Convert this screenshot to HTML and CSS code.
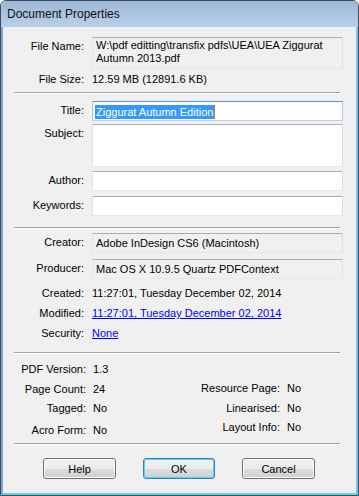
FILE: index.html
```html
<!DOCTYPE html>
<html lang="en">
<head>
  <meta charset="UTF-8">
  <meta name="viewport" content="width=device-width, initial-scale=1.0">
  <title>Document Properties</title>
  <link rel="stylesheet" href="styles.css">
</head>
<body>
  <div class="window">
    <div class="titlebar">Document Properties</div>
    <div class="frame">
      <div class="content">
        <div class="row file-name">
          <span class="label">File Name:</span>
          <div class="box readonly tall">W:\pdf editting\transfix pdfs\UEA\UEA Ziggurat Autumn 2013.pdf</div>
        </div>
        <div class="row text-row">
          <span class="label">File Size:</span>
          <span class="value">12.59 MB (12891.6 KB)</span>
        </div>

        <div class="sep sep-1"></div>

        <div class="row title-row">
          <span class="label">Title:</span>
          <div class="box focus"><span class="selected">Ziggurat Autumn Edition</span><span class="caret"></span></div>
        </div>
        <div class="row subject-row">
          <span class="label">Subject:</span>
          <div class="box subject"></div>
        </div>
        <div class="row author-row">
          <span class="label">Author:</span>
          <div class="box"></div>
        </div>
        <div class="row keywords-row">
          <span class="label">Keywords:</span>
          <div class="box"></div>
        </div>

        <div class="sep sep-2"></div>

        <div class="row creator-row">
          <span class="label">Creator:</span>
          <div class="box readonly">Adobe InDesign CS6 (Macintosh)</div>
        </div>
        <div class="row producer-row">
          <span class="label">Producer:</span>
          <div class="box readonly">Mac OS X 10.9.5 Quartz PDFContext</div>
        </div>
        <div class="row text-row created-row">
          <span class="label">Created:</span>
          <span class="value">11:27:01, Tuesday December 02, 2014</span>
        </div>
        <div class="row text-row">
          <span class="label">Modified:</span>
          <a class="value link" href="#">11:27:01, Tuesday December 02, 2014</a>
        </div>
        <div class="row text-row">
          <span class="label">Security:</span>
          <a class="value link" href="#">None</a>
        </div>

        <div class="sep sep-3"></div>

        <div class="info">
          <div class="info-col left">
            <div class="pair h20"><span class="label">PDF Version:</span><span class="value">1.3</span></div>
            <div class="pair h19"><span class="label">Page Count:</span><span class="value">24</span></div>
            <div class="pair h20"><span class="label">Tagged:</span><span class="value">No</span></div>
            <div class="pair h20 acro"><span class="label">Acro Form:</span><span class="value">No</span></div>
          </div>
          <div class="info-col right">
            <div class="pair h20"><span class="label">Resource Page:</span><span class="value">No</span></div>
            <div class="pair h19"><span class="label">Linearised:</span><span class="value">No</span></div>
            <div class="pair h20"><span class="label">Layout Info:</span><span class="value">No</span></div>
          </div>
        </div>

        <div class="sep sep-4"></div>

        <div class="buttons">
          <button type="button">Help</button>
          <button type="button" class="default">OK</button>
          <button type="button">Cancel</button>
        </div>
      </div>
    </div>
  </div>
</body>
</html>
```

FILE: styles.css
```css
html, body {
  margin: 0;
  padding: 0;
}
body {
  width: 359px;
  height: 496px;
  font-family: "Liberation Sans", Arial, sans-serif;
  font-size: 11px;
  color: #000;
  background: #fff;
}
.window {
  box-sizing: border-box;
  width: 359px;
  height: 496px;
  border: 1px solid #3e4c5c;
  border-radius: 6px 6px 0 0;
  display: flex;
  flex-direction: column;
  overflow: hidden;
}
.titlebar {
  height: 26px;
  line-height: 26px;
  padding-left: 6px;
  font-size: 12px;
  color: #111;
  background: linear-gradient(#9db7d6, #b9d0ea);
  flex: none;
}
.frame {
  flex: 1;
  display: flex;
  border-left: 2px solid #77a6d6;
  border-right: 2px solid #6fc8ee;
  border-bottom: 2px solid #5fd2f2;
}
.content {
  flex: 1;
  background: #f0f0f0;
  padding: 10px 13px 0 11px;
}
.row {
  display: flex;
  align-items: flex-start;
  gap: 8px;
}
.label {
  width: 70px;
  flex: none;
  text-align: right;
  white-space: nowrap;
}
.row .label {
  padding-top: 3px;
}
.text-row {
  height: 20px;
  align-items: center;
}
.text-row .label {
  padding-top: 0;
}
.box {
  box-sizing: border-box;
  flex: 1;
  height: 20px;
  background: #fff;
  border: 1px solid;
  border-color: #abadb3 #dbdfe6 #e3e9ef #e2e3ea;
  padding: 3px 3px 0;
  line-height: 13px;
  white-space: nowrap;
}
.box.readonly {
  background: #f0f0f0;
}
.box.tall {
  height: 32px;
  padding-top: 1px;
  white-space: normal;
}
.box.subject {
  height: 43px;
}
.box.focus {
  border-color: #5e93c6 #a9cbe9 #b7d2ec #a9cbe9;
  padding-left: 2px;
}
.selected {
  background: #3399ff;
  color: #fff;
  padding: 1px 1px 1px 1px;
}
.caret {
  display: inline-block;
  width: 1px;
  height: 14px;
  background: #d87b16;
  vertical-align: -3px;
}
.link {
  color: #0000ff;
  text-decoration: underline;
}
.sep {
  height: 0;
  border-top: 1px solid #a0a0a0;
  border-bottom: 1px solid #fff;
  margin-right: 3px;
}
.sep-1 { margin-top: 3px; }
.title-row { margin-top: 7px; }
.subject-row { margin-top: 3px; }
.author-row { margin-top: 4px; }
.keywords-row { margin-top: 5px; }
.sep-2 { margin-top: 11px; }
.creator-row { margin-top: 4px; }
.producer-row { margin-top: 6px; }
.created-row { margin-top: 4px; }
.sep-3 { margin-top: 9px; }
.info {
  display: grid;
  grid-template-columns: 176px auto;
  margin-top: 5px;
}
.pair {
  display: flex;
  align-items: center;
  gap: 7px;
}
.pair .label {
  width: 72px;
}
.right .pair .label {
  width: 90px;
}
.right {
  padding-top: 19px;
}
.h20 { height: 20px; }
.h19 { height: 19px; }
.acro { margin-top: 2px; }
.sep-4 { margin-top: 3px; }
.buttons {
  display: flex;
  gap: 27px;
  padding-left: 29px;
  margin-top: 13px;
}
.buttons button {
  box-sizing: border-box;
  width: 73px;
  height: 21px;
  font-family: "Liberation Sans", Arial, sans-serif;
  font-size: 11px;
  color: #000;
  border: 1px solid #707070;
  border-radius: 3px;
  background: linear-gradient(#f2f2f2 0%, #ebebeb 50%, #dddddd 51%, #cfcfcf 100%);
  box-shadow: inset 0 0 0 1px #fcfcfc;
  padding: 0;
}
.buttons button.default {
  width: 72px;
  border-color: #3c7fb1;
  box-shadow: inset 0 0 0 1px #48d8fb;
  background: linear-gradient(#eaf6fd 0%, #d9f0fc 50%, #bee6fd 51%, #a7d9f5 100%);
  background: linear-gradient(#f2f2f2 0%, #ebebeb 50%, #dddddd 51%, #cfcfcf 100%);
}
```
